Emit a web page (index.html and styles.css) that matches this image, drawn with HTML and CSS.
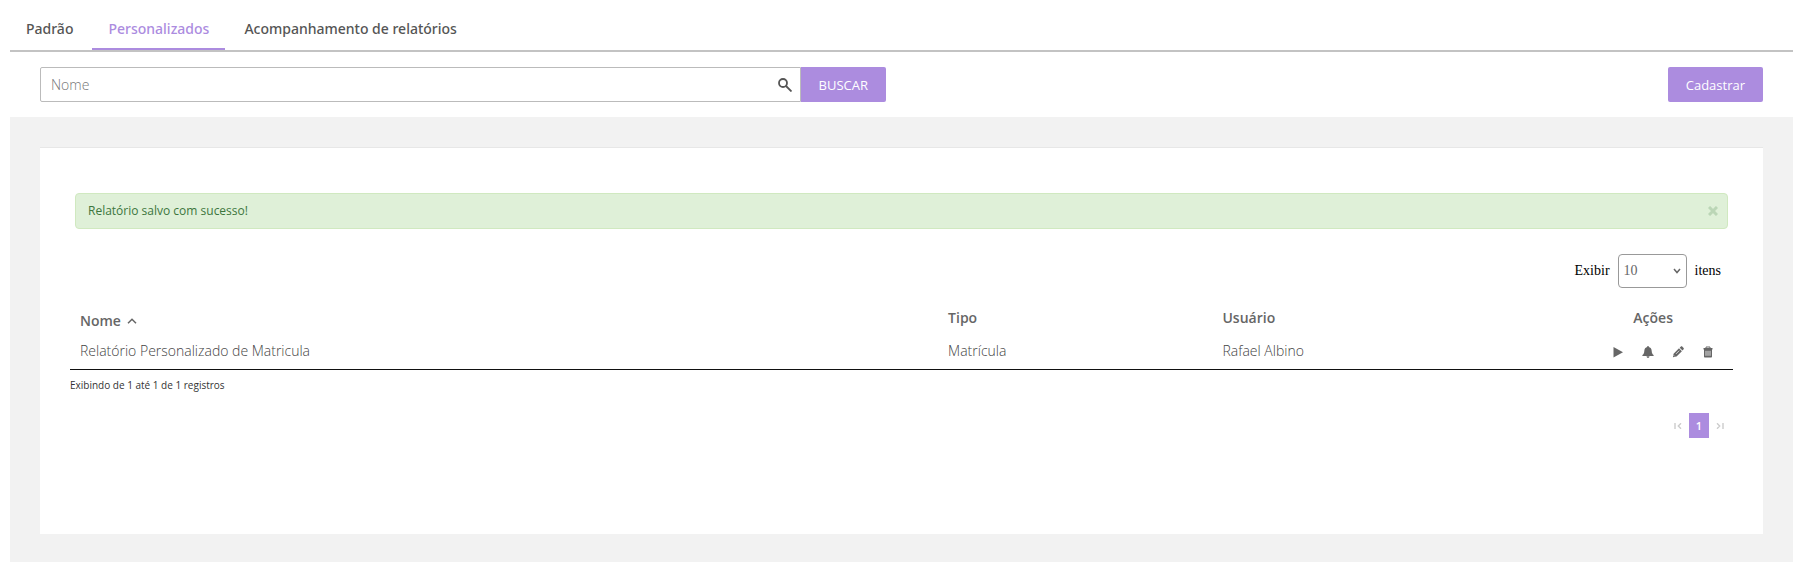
FILE: index.html
```html
<!DOCTYPE html>
<html lang="pt-BR">
  <head>
    <meta charset="UTF-8" />
    <meta name="viewport" content="width=device-width, initial-scale=1.0" />
    <title>Relatórios personalizados</title>
    <link rel="stylesheet" href="styles.css">
  </head>
  <body>
    <nav class="tabs">
      <a href="#padrao" class="tab">Padrão</a>
      <a href="#personalizados" class="tab active">Personalizados</a>
      <a href="#acompanhamento" class="tab">Acompanhamento de relatórios</a>
    </nav>

    <div class="toolbar">
      <form class="search">
        <label class="search-field">
          <input type="text" placeholder="Nome" aria-label="Nome" />
          <svg width="14" height="14" viewBox="0 0 14 14" fill="none" stroke="#555" stroke-width="1.8">
            <circle cx="5" cy="5" r="4" />
            <path d="M8 8l5.500 5.500" />
          </svg>
        </label>
        <button type="submit" class="btn btn-search">BUSCAR</button>
      </form>
      <button type="button" class="btn">Cadastrar</button>
    </div>

    <main class="content">
      <section class="card">
        <div class="alert" role="alert">
          <span>Relatório salvo com sucesso!</span>
          <button type="button" class="alert-close" aria-label="Fechar">
            <svg width="10" height="10" viewBox="0 0 10 10" fill="none" stroke="#bbd6b6" stroke-width="3">
              <path d="M1 1l8 8M9 1l-8 8" />
            </svg>
          </button>
        </div>

        <div class="page-size">
          <label for="pageSize">Exibir</label>
          <span class="select-wrap">
            <select id="pageSize">
              <option>10</option>
              <option>25</option>
              <option>50</option>
            </select>
            <svg width="8" height="6" viewBox="0 0 8 6" fill="none" stroke="#666" stroke-width="1.5">
              <path d="M1 1l3 3.500L7 1" />
            </svg>
          </span>
          <span>itens</span>
        </div>

        <table class="reports">
          <thead>
            <tr>
              <th class="col-name">
                <div class="sorted">
                  Nome
                  <svg width="10" height="6" viewBox="0 0 10 6" fill="none" stroke="#666" stroke-width="1.5">
                    <path d="M1 5.200l4-4 4 4" />
                  </svg>
                </div>
              </th>
              <th class="col-type">Tipo</th>
              <th class="col-user">Usuário</th>
              <th class="col-actions">Ações</th>
            </tr>
          </thead>
          <tbody>
            <tr>
              <td>Relatório Personalizado de Matricula</td>
              <td>Matrícula</td>
              <td>Rafael Albino</td>
              <td>
                <div class="actions">
                  <button type="button" aria-label="Executar">
                    <svg width="12" height="12" viewBox="0 0 12 12">
                      <path d="M1.500 1v10.500L11 6.300z" />
                    </svg>
                  </button>
                  <button type="button" aria-label="Notificar">
                    <svg width="12" height="12" viewBox="0 0 12 12">
                      <path d="M5.300 0h1.400v1C8.600 1.400 9.600 2.800 9.700 5c.1 2.300.8 3.300 1.900 4v.9H.4V9c1.100-.7 1.800-1.700 1.900-4 .1-2.200 1.100-3.600 3-4zM4.500 10.300h3C7.300 11.500 6.800 12 6 12s-1.300-.5-1.500-1.700z" />
                    </svg>
                  </button>
                  <button type="button" aria-label="Editar">
                    <svg width="12" height="12" viewBox="0 0 12 12">
                      <path d="M.9 11.300l.7-3.600L7 2.300l2.900 2.900-5.400 5.400zM7.700 1.700L8.900.6c.4-.4.9-.4 1.300 0l1.400 1.400c.4.4.4.900 0 1.300l-1.100 1.200z" />
                      <path d="M4 7.900l3.200-3.200" fill="none" stroke="#fff" stroke-width=".7" />
                      <path d="M1.900 9.500l.8.8" fill="none" stroke="#fff" stroke-width=".9" />
                    </svg>
                  </button>
                  <button type="button" aria-label="Excluir">
                    <svg width="12" height="12" viewBox="0 0 12 12">
                      <path d="M4 2.500V1h4v1.500" fill="none" stroke="#666" />
                      <path d="M1.500 2h9v1.500h-9zM2 3.500h8v7c0 .6-.4 1-1 1H3c-.6 0-1-.4-1-1z" />
                      <path d="M4 4.800v5M6 4.800v5M8 4.800v5" fill="none" stroke="#fff" stroke-width=".8" />
                    </svg>
                  </button>
                </div>
              </td>
            </tr>
          </tbody>
        </table>

        <p class="summary">Exibindo de 1 até 1 de 1 registros</p>

        <div class="pagination">
          <button type="button" aria-label="Primeira página" disabled>
            <svg width="8" height="6" viewBox="0 0 8 6" fill="none" stroke="#ccc" stroke-width="1.4">
              <path d="M1 0v6M7 .3L4.300 3 7 5.700" />
            </svg>
          </button>
          <button type="button" class="current">1</button>
          <button type="button" aria-label="Última página" disabled>
            <svg width="8" height="6" viewBox="0 0 8 6" fill="none" stroke="#ccc" stroke-width="1.4">
              <path d="M7 0v6M1 .3L3.700 3 1 5.700" />
            </svg>
          </button>
        </div>
      </section>
    </main>
  </body>
</html>
```

FILE: styles.css
```css
* {
  box-sizing: border-box;
}

body {
  margin: 0 0 0 10px;
  min-height: 100vh;
  display: flex;
  flex-direction: column;
  font-family: "Open Sans", "Noto Sans", sans-serif;
  font-size: 14px;
  line-height: 20px;
  color: #666;
  background: #fff;
}

button,
input,
select {
  font: inherit;
  color: inherit;
}

button {
  border: none;
  padding: 0;
  background: none;
  cursor: pointer;
}

/* Tabs */
.tabs {
  display: flex;
  gap: 3px;
  padding-top: 8px;
  border-bottom: 2px solid #c3c3c3;
}

.tab {
  padding: 11px 16px 9px;
  border-bottom: 2px solid transparent;
  font-family: "Noto Sans", sans-serif;
  font-weight: 500;
  color: #555;
  text-decoration: none;
}

.tab.active {
  color: #ac8cdf;
  border-bottom-color: #ac8cdf;
}

/* Search bar */
.toolbar {
  display: flex;
  justify-content: space-between;
  padding: 15px 30px;
}

.search {
  display: flex;
  width: 49.1%;
}

.search-field {
  flex: 1;
  display: flex;
  align-items: center;
  padding: 0 8px 0 10px;
  border: 1px solid #bbb;
  border-radius: 2px 0 0 2px;
}

.search-field input {
  flex: 1;
  min-width: 0;
  padding: 0;
  border: none;
  outline: none;
  background: none;
  font-weight: 300;
}

.search-field input::placeholder {
  color: #777;
}

.btn {
  height: 35px;
  padding: 0 18px;
  border-radius: 2px;
  background: #ac8cdf;
  color: #fff;
  font-size: 13px;
}

.btn-search {
  border-radius: 0 2px 2px 0;
}

/* Content */
.content {
  flex: 1;
  padding: 30px;
  padding-bottom: 28px;
  background: #f2f2f2;
}

.card {
  min-height: 387px;
  padding: 45px 30px;
  border-top: 1px solid #e7e7e7;
  background: #fff;
}

.alert {
  display: flex;
  align-items: center;
  justify-content: space-between;
  height: 36px;
  margin: 0 5px 25px;
  padding: 0 9px 0 12px;
  border: 1px solid #d0e9c0;
  border-radius: 4px;
  background: #dff0d8;
  color: #3c763d;
  font-size: 12px;
}

.alert-close {
  display: flex;
}

.page-size {
  display: flex;
  align-items: center;
  justify-content: flex-end;
  gap: 8px;
  padding-right: 12px;
  font-family: "Liberation Serif", serif;
  color: #000;
}

.select-wrap {
  position: relative;
}

.select-wrap select {
  display: block;
  width: 69px;
  height: 34px;
  padding: 0 5px;
  border: 1px solid #999;
  border-radius: 4px;
  background: #fff;
  appearance: none;
  color: #666;
}

.select-wrap svg {
  position: absolute;
  top: 14px;
  right: 6px;
  pointer-events: none;
}

/* Reports table */
.reports {
  width: 100%;
  margin-top: 15px;
  border-collapse: separate;
  border-spacing: 0;
  border-bottom: 1px solid #111;
  table-layout: fixed;
}

.reports th {
  padding: 5px 10px;
  font-weight: 600;
  text-align: left;
  vertical-align: top;
}

.reports td {
  padding: 5px 10px 8px;
  font-weight: 300;
  color: #444;
  vertical-align: top;
}

.reports .col-name {
  width: 52.2%;
  padding-top: 8px;
}

.sorted {
  display: flex;
  align-items: center;
  gap: 6px;
}

.reports .col-type {
  width: 16.5%;
}

.reports .col-actions {
  width: 9.6%;
  padding-right: 0;
  padding-left: 0;
  text-align: center;
}

.actions {
  display: flex;
  justify-content: flex-end;
  gap: 18px;
  padding: 5px 9px 0 0;
}

.actions svg {
  fill: #666;
}

.actions button,
.pagination button {
  display: flex;
  align-items: center;
  justify-content: center;
}

.summary {
  margin: 5px 0 18px;
  font-size: 10px;
  color: #333;
}

.pagination {
  display: flex;
  justify-content: flex-end;
  padding-right: 2px;
}

.pagination button {
  width: 22px;
  height: 25px;
  font-size: 11px;
}

.pagination .current {
  width: 20px;
  background: #ac8cdf;
  color: #fff;
  font-weight: 600;
}
```
